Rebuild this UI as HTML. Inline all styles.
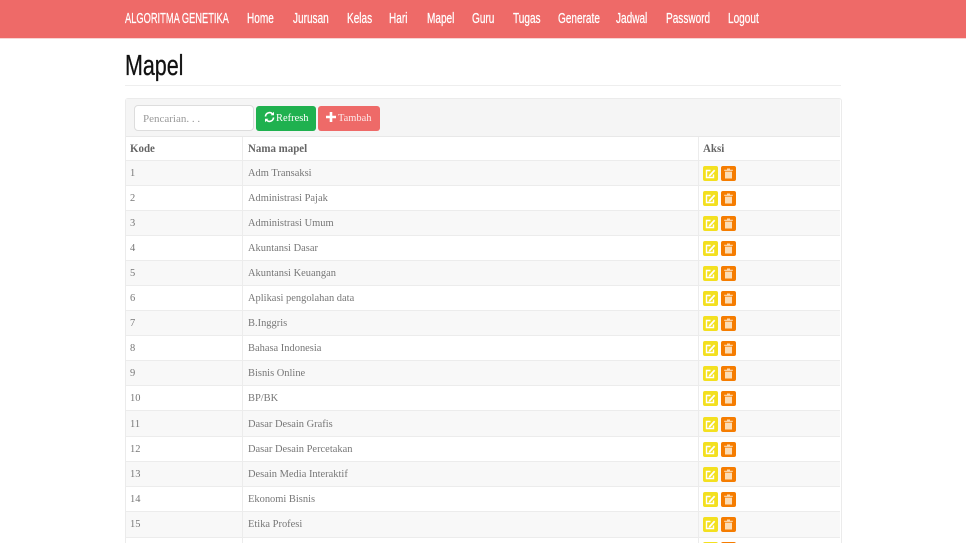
<!DOCTYPE html>
<html><head><meta charset="utf-8"><title>Mapel</title>
<style>
html,body{margin:0;padding:0;background:#fff;width:966px;height:543px;overflow:hidden}
body{position:relative;font-family:"Liberation Serif",serif;color:#777}
.abs,.n,.r,.c{position:absolute}
#nav{left:0;top:0;width:966px;height:38px;background:#ee6a68;border-bottom:1px solid #f7d5d4}
.n{top:10px;color:#fff;font:15px/18px "Liberation Sans",sans-serif;white-space:nowrap;transform-origin:0 0;transform:scaleX(.67);-webkit-text-stroke:.25px #fff}
#h{left:125px;top:49px;font:29px/34px "Liberation Sans",sans-serif;color:#111;transform-origin:0 0;transform:scaleX(.74);-webkit-text-stroke:.3px #111}
#hr{left:125px;top:85px;width:716px;height:1px;background:#eee}
#panel{left:125px;top:98px;width:715px;height:445px;border:1px solid #ebebeb;border-bottom:0;border-radius:3px 3px 0 0}
#tool{left:126px;top:99px;width:714px;height:37px;background:#f5f5f5;border-bottom:1px solid #e8e8e8}
#inp{left:134px;top:105px;width:118px;height:24px;background:#fff;border:1px solid #ddd;border-radius:4px;font-size:11px;line-height:26px;text-indent:8px;color:#999}
.b{top:106px;height:25px;border-radius:3px;color:#fff;font-size:11px;line-height:24px;white-space:nowrap}
.b svg{position:absolute}
.b span{position:absolute;top:0;transform-origin:0 0;transform:scaleX(.95)}
.r{left:126px;width:714px;height:25px;box-sizing:border-box;border-bottom:1px solid #ececec;font-size:11px}
.s{background:#f8f8f8}
.c{top:1px;line-height:23px;white-space:nowrap;transform-origin:0 0;transform:scaleX(.95)}
.a{left:4px}.d{left:122px}
.th{font-weight:bold;color:#666;font-size:11.5px}
.v{position:absolute;top:137px;width:1px;height:406px;background:#ececec}
.e,.t{position:absolute;top:5px;width:15px;height:15px;border-radius:2px}
.e{left:577px;background:#f3e01f}
.t{left:595px;background:#f57c00}
.e svg,.t svg{position:absolute;left:0;top:0}
</style></head><body>
<div id="nav" class="abs"></div>
<div class="n" style="left:125px;transform:scaleX(.62)">ALGORITMA GENETIKA</div>
<div class="n" style="left:247px">Home</div>
<div class="n" style="left:293px">Jurusan</div>
<div class="n" style="left:347px">Kelas</div>
<div class="n" style="left:389px">Hari</div>
<div class="n" style="left:427px">Mapel</div>
<div class="n" style="left:472px">Guru</div>
<div class="n" style="left:513px">Tugas</div>
<div class="n" style="left:558px">Generate</div>
<div class="n" style="left:616px">Jadwal</div>
<div class="n" style="left:666px">Password</div>
<div class="n" style="left:728px">Logout</div>
<div id="h" class="abs">Mapel</div>
<div id="hr" class="abs"></div>
<div id="panel" class="abs"></div>
<div id="tool" class="abs"></div>
<div id="inp" class="abs">Pencarian. . .</div>
<div class="abs b" style="left:256px;width:60px;background:#1fb14f">
<svg style="left:8px;top:5px" width="11" height="12" viewBox="0 0 11 12"><path d="M1.5 5.5A4 4 0 0 1 8.5 3M9.5 6.5A4 4 0 0 1 2.5 9" fill="none" stroke="#fff" stroke-width="1.6"/><path d="M10 .8V4.2H6.6zM1 11.2V7.8H4.4z" fill="#fff"/></svg>
<span style="left:20px">Refresh</span></div>
<div class="abs b" style="left:318px;width:62px;background:#ee6a68">
<svg style="left:8px;top:6px" width="10" height="10" viewBox="0 0 10 10"><path d="M3.7 0h2.6v3.7H10v2.6H6.3V10H3.7V6.3H0V3.7h3.7z" fill="#fff"/></svg>
<span style="left:20px;color:#fde8e8">Tambah</span></div>

<div class="r th" style="top:137px;height:24px"><div class="c a">Kode</div><div class="c d">Nama mapel</div><div class="c" style="left:577px">Aksi</div></div>

<div class="r s" style="top:161px"><div class="c a">1</div><div class="c d">Adm Transaksi</div><div class="e"><svg width="15" height="15" viewBox="0 0 15 15"><path d="M10.5 8.5V11.5H3.5V4.5H7.5" fill="none" stroke="#fff" stroke-width="1.4"/><path d="M6 9 11 3.6l1.3 1.2-5 5.4L5.6 10.6z" fill="#fff"/></svg></div><div class="t"><svg width="15" height="15" viewBox="0 0 15 15"><path d="M6 2.5h3v1.2h2.8v1.2H3.2V3.7H6zM4 5.6h7V12.5H4z" fill="#fbdcb5"/></svg></div></div>
<div class="r" style="top:186px"><div class="c a">2</div><div class="c d">Administrasi Pajak</div><div class="e"><svg width="15" height="15" viewBox="0 0 15 15"><path d="M10.5 8.5V11.5H3.5V4.5H7.5" fill="none" stroke="#fff" stroke-width="1.4"/><path d="M6 9 11 3.6l1.3 1.2-5 5.4L5.6 10.6z" fill="#fff"/></svg></div><div class="t"><svg width="15" height="15" viewBox="0 0 15 15"><path d="M6 2.5h3v1.2h2.8v1.2H3.2V3.7H6zM4 5.6h7V12.5H4z" fill="#fbdcb5"/></svg></div></div>
<div class="r s" style="top:211px"><div class="c a">3</div><div class="c d">Administrasi Umum</div><div class="e"><svg width="15" height="15" viewBox="0 0 15 15"><path d="M10.5 8.5V11.5H3.5V4.5H7.5" fill="none" stroke="#fff" stroke-width="1.4"/><path d="M6 9 11 3.6l1.3 1.2-5 5.4L5.6 10.6z" fill="#fff"/></svg></div><div class="t"><svg width="15" height="15" viewBox="0 0 15 15"><path d="M6 2.5h3v1.2h2.8v1.2H3.2V3.7H6zM4 5.6h7V12.5H4z" fill="#fbdcb5"/></svg></div></div>
<div class="r" style="top:236px"><div class="c a">4</div><div class="c d">Akuntansi Dasar</div><div class="e"><svg width="15" height="15" viewBox="0 0 15 15"><path d="M10.5 8.5V11.5H3.5V4.5H7.5" fill="none" stroke="#fff" stroke-width="1.4"/><path d="M6 9 11 3.6l1.3 1.2-5 5.4L5.6 10.6z" fill="#fff"/></svg></div><div class="t"><svg width="15" height="15" viewBox="0 0 15 15"><path d="M6 2.5h3v1.2h2.8v1.2H3.2V3.7H6zM4 5.6h7V12.5H4z" fill="#fbdcb5"/></svg></div></div>
<div class="r s" style="top:261px"><div class="c a">5</div><div class="c d">Akuntansi Keuangan</div><div class="e"><svg width="15" height="15" viewBox="0 0 15 15"><path d="M10.5 8.5V11.5H3.5V4.5H7.5" fill="none" stroke="#fff" stroke-width="1.4"/><path d="M6 9 11 3.6l1.3 1.2-5 5.4L5.6 10.6z" fill="#fff"/></svg></div><div class="t"><svg width="15" height="15" viewBox="0 0 15 15"><path d="M6 2.5h3v1.2h2.8v1.2H3.2V3.7H6zM4 5.6h7V12.5H4z" fill="#fbdcb5"/></svg></div></div>
<div class="r" style="top:286px"><div class="c a">6</div><div class="c d">Aplikasi pengolahan data</div><div class="e"><svg width="15" height="15" viewBox="0 0 15 15"><path d="M10.5 8.5V11.5H3.5V4.5H7.5" fill="none" stroke="#fff" stroke-width="1.4"/><path d="M6 9 11 3.6l1.3 1.2-5 5.4L5.6 10.6z" fill="#fff"/></svg></div><div class="t"><svg width="15" height="15" viewBox="0 0 15 15"><path d="M6 2.5h3v1.2h2.8v1.2H3.2V3.7H6zM4 5.6h7V12.5H4z" fill="#fbdcb5"/></svg></div></div>
<div class="r s" style="top:311px"><div class="c a">7</div><div class="c d">B.Inggris</div><div class="e"><svg width="15" height="15" viewBox="0 0 15 15"><path d="M10.5 8.5V11.5H3.5V4.5H7.5" fill="none" stroke="#fff" stroke-width="1.4"/><path d="M6 9 11 3.6l1.3 1.2-5 5.4L5.6 10.6z" fill="#fff"/></svg></div><div class="t"><svg width="15" height="15" viewBox="0 0 15 15"><path d="M6 2.5h3v1.2h2.8v1.2H3.2V3.7H6zM4 5.6h7V12.5H4z" fill="#fbdcb5"/></svg></div></div>
<div class="r" style="top:336px"><div class="c a">8</div><div class="c d">Bahasa Indonesia</div><div class="e"><svg width="15" height="15" viewBox="0 0 15 15"><path d="M10.5 8.5V11.5H3.5V4.5H7.5" fill="none" stroke="#fff" stroke-width="1.4"/><path d="M6 9 11 3.6l1.3 1.2-5 5.4L5.6 10.6z" fill="#fff"/></svg></div><div class="t"><svg width="15" height="15" viewBox="0 0 15 15"><path d="M6 2.5h3v1.2h2.8v1.2H3.2V3.7H6zM4 5.6h7V12.5H4z" fill="#fbdcb5"/></svg></div></div>
<div class="r s" style="top:361px"><div class="c a">9</div><div class="c d">Bisnis Online</div><div class="e"><svg width="15" height="15" viewBox="0 0 15 15"><path d="M10.5 8.5V11.5H3.5V4.5H7.5" fill="none" stroke="#fff" stroke-width="1.4"/><path d="M6 9 11 3.6l1.3 1.2-5 5.4L5.6 10.6z" fill="#fff"/></svg></div><div class="t"><svg width="15" height="15" viewBox="0 0 15 15"><path d="M6 2.5h3v1.2h2.8v1.2H3.2V3.7H6zM4 5.6h7V12.5H4z" fill="#fbdcb5"/></svg></div></div>
<div class="r" style="top:386px"><div class="c a">10</div><div class="c d">BP/BK</div><div class="e"><svg width="15" height="15" viewBox="0 0 15 15"><path d="M10.5 8.5V11.5H3.5V4.5H7.5" fill="none" stroke="#fff" stroke-width="1.4"/><path d="M6 9 11 3.6l1.3 1.2-5 5.4L5.6 10.6z" fill="#fff"/></svg></div><div class="t"><svg width="15" height="15" viewBox="0 0 15 15"><path d="M6 2.5h3v1.2h2.8v1.2H3.2V3.7H6zM4 5.6h7V12.5H4z" fill="#fbdcb5"/></svg></div></div>
<div class="r s" style="top:411px;height:26px"><div class="c a" style="top:2px">11</div><div class="c d" style="top:2px">Dasar Desain Grafis</div><div class="e" style="top:6px"><svg width="15" height="15" viewBox="0 0 15 15"><path d="M10.5 8.5V11.5H3.5V4.5H7.5" fill="none" stroke="#fff" stroke-width="1.4"/><path d="M6 9 11 3.6l1.3 1.2-5 5.4L5.6 10.6z" fill="#fff"/></svg></div><div class="t" style="top:6px"><svg width="15" height="15" viewBox="0 0 15 15"><path d="M6 2.5h3v1.2h2.8v1.2H3.2V3.7H6zM4 5.6h7V12.5H4z" fill="#fbdcb5"/></svg></div></div>
<div class="r" style="top:437px"><div class="c a">12</div><div class="c d">Dasar Desain Percetakan</div><div class="e"><svg width="15" height="15" viewBox="0 0 15 15"><path d="M10.5 8.5V11.5H3.5V4.5H7.5" fill="none" stroke="#fff" stroke-width="1.4"/><path d="M6 9 11 3.6l1.3 1.2-5 5.4L5.6 10.6z" fill="#fff"/></svg></div><div class="t"><svg width="15" height="15" viewBox="0 0 15 15"><path d="M6 2.5h3v1.2h2.8v1.2H3.2V3.7H6zM4 5.6h7V12.5H4z" fill="#fbdcb5"/></svg></div></div>
<div class="r s" style="top:462px"><div class="c a">13</div><div class="c d">Desain Media Interaktif</div><div class="e"><svg width="15" height="15" viewBox="0 0 15 15"><path d="M10.5 8.5V11.5H3.5V4.5H7.5" fill="none" stroke="#fff" stroke-width="1.4"/><path d="M6 9 11 3.6l1.3 1.2-5 5.4L5.6 10.6z" fill="#fff"/></svg></div><div class="t"><svg width="15" height="15" viewBox="0 0 15 15"><path d="M6 2.5h3v1.2h2.8v1.2H3.2V3.7H6zM4 5.6h7V12.5H4z" fill="#fbdcb5"/></svg></div></div>
<div class="r" style="top:487px"><div class="c a">14</div><div class="c d">Ekonomi Bisnis</div><div class="e"><svg width="15" height="15" viewBox="0 0 15 15"><path d="M10.5 8.5V11.5H3.5V4.5H7.5" fill="none" stroke="#fff" stroke-width="1.4"/><path d="M6 9 11 3.6l1.3 1.2-5 5.4L5.6 10.6z" fill="#fff"/></svg></div><div class="t"><svg width="15" height="15" viewBox="0 0 15 15"><path d="M6 2.5h3v1.2h2.8v1.2H3.2V3.7H6zM4 5.6h7V12.5H4z" fill="#fbdcb5"/></svg></div></div>
<div class="r s" style="top:512px;height:26px"><div class="c a">15</div><div class="c d">Etika Profesi</div><div class="e"><svg width="15" height="15" viewBox="0 0 15 15"><path d="M10.5 8.5V11.5H3.5V4.5H7.5" fill="none" stroke="#fff" stroke-width="1.4"/><path d="M6 9 11 3.6l1.3 1.2-5 5.4L5.6 10.6z" fill="#fff"/></svg></div><div class="t"><svg width="15" height="15" viewBox="0 0 15 15"><path d="M6 2.5h3v1.2h2.8v1.2H3.2V3.7H6zM4 5.6h7V12.5H4z" fill="#fbdcb5"/></svg></div></div>
<div class="r" style="top:538px;border-bottom:0"><div class="e" style="top:4px"></div><div class="t" style="top:4px"></div></div>
<div class="v" style="left:242px"></div>
<div class="v" style="left:698px"></div>
</body></html>
